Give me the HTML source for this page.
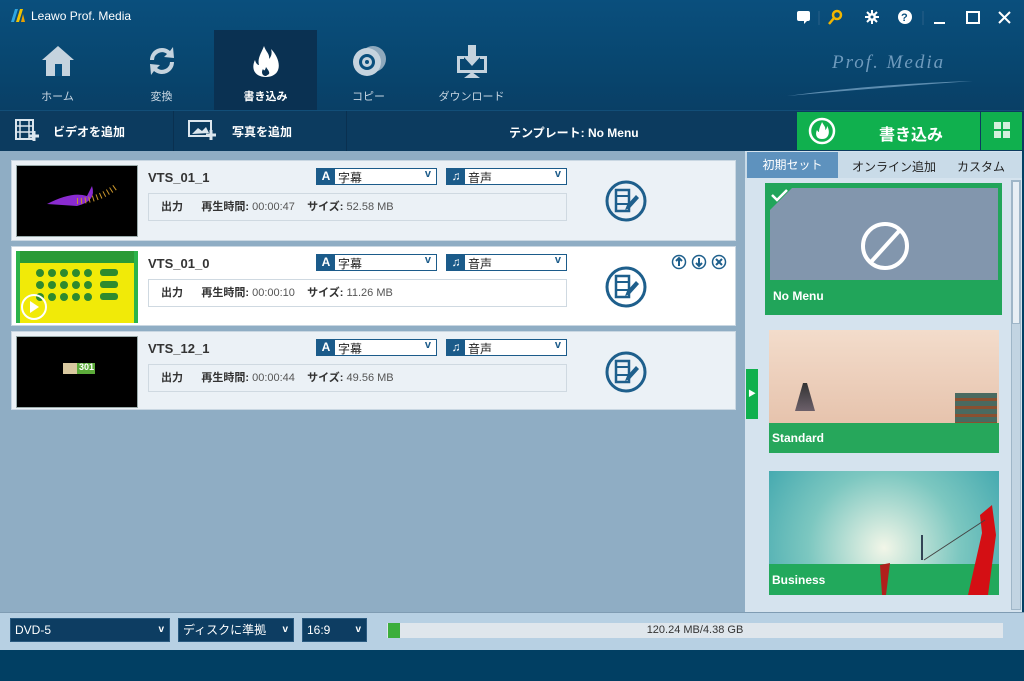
<!DOCTYPE html>
<html><head><meta charset="utf-8"><style>
*{margin:0;padding:0;box-sizing:border-box}
body{width:1024px;height:681px;overflow:hidden;font-family:"Liberation Sans","Noto Sans CJK JP",sans-serif;background:#013f63;position:relative}
.a{position:absolute}
.top{left:0;top:0;width:1024px;height:110px;background:linear-gradient(#0a4f7d,#08466f 60%,#093f66)}
.nav{top:30px;width:103px;height:80px;color:#c8d6e2;font-size:11px;text-align:center}
.nav span{position:absolute;left:0;right:0;top:58px}
.nav svg{position:absolute;left:34px;top:14px}
.bar2{left:0;top:110px;width:1024px;height:41px;background:#0c3b5f;border-top:1px solid #124e78}
.bt{color:#fff;font-size:12px;font-weight:bold}
.item{left:11px;width:725px;background:#ebf1f6;border:1px solid #c9d7e2}
.th{left:4px;top:4px;width:122px;height:72px;background:#000;border:1px solid #9aa}
.nm{left:136px;top:9px;font-size:13px;font-weight:bold;color:#333}
.sel{top:7px;height:17px;background:#fff;border:1px solid #1b5b8a;font-size:12px;color:#222}
.sel b{display:inline-block;width:18px;height:15px;background:#1b5b8a;color:#fff;text-align:center;font-size:12px;line-height:15px;vertical-align:top;margin-right:3px}
.sel i{position:absolute;right:5px;top:-1px;font-style:normal;color:#1b5b8a;font-weight:bold;font-size:11px}
.info{left:136px;top:32px;width:419px;height:28px;border:1px solid #cfd9e1;font-size:11px;color:#333;line-height:26px;padding-left:12px}
.info .g{color:#555}
.ed{left:592px;top:18px}
.ddl{top:618px;height:24px;background:#0d3d62;border:1px solid #2a5a80;color:#fff;font-size:12px;line-height:22px;padding-left:4px}
.ddl i{position:absolute;right:5px;font-style:normal;font-size:10px;font-weight:bold}
</style></head><body>
<div class="a top"></div>
<div class="a" style="left:10px;top:8px;width:16px;height:15px"><svg width="16" height="15"><path d="M1 14 L5 1 L8 1 L4 14Z" fill="#2fa5e0"/><path d="M6 14 L10 1 L13 1 L9 14Z" fill="#f2c200"/><path d="M11 14 L13 6 L15 14Z" fill="#e9a000"/></svg></div>
<div class="a" style="left:31px;top:9px;color:#fff;font-size:12px">Leawo Prof. Media</div>
<div class="a" style="left:795px;top:9px"><svg width="230" height="18">
<rect x="2" y="2" width="13" height="10" rx="2" fill="#fff"/><path d="M9 12 L9 15 L12 12Z" fill="#fff"/>
<line x1="24" y1="2" x2="24" y2="16" stroke="#2a6088"/>
<circle cx="42" cy="6" r="4" fill="none" stroke="#f2b600" stroke-width="2.5"/><path d="M39 9 L34 15" stroke="#f2b600" stroke-width="2.5"/>
<circle cx="77" cy="8" r="4" fill="#fff"/><path d="M77 1 V15 M70 8 H84 M72 3 L82 13 M82 3 L72 13" stroke="#fff" stroke-width="2"/><circle cx="77" cy="8" r="1.5" fill="#0a4f7d"/>
<circle cx="110" cy="8" r="7" fill="#fff"/><text x="106" y="12" font-size="11" font-weight="bold" fill="#0a4f7d" font-family="Liberation Sans">?</text>
<line x1="128" y1="2" x2="128" y2="16" stroke="#2a6088"/>
<rect x="139" y="13" width="11" height="2" fill="#fff"/>
<rect x="172" y="3" width="12" height="11" fill="none" stroke="#fff" stroke-width="2"/>
<path d="M204 3 L215 14 M215 3 L204 14" stroke="#fff" stroke-width="2"/>
</svg></div>
<div class="a nav" style="left:6px"><svg width="36" height="34"><path d="M18 2 L2 16 L6 16 L6 32 L30 32 L30 16 L34 16Z" fill="#c5d3de"/><rect x="15" y="20" width="7" height="12" fill="#0a4f7d"/></svg><span>ホーム</span></div>
<div class="a nav" style="left:110px"><svg width="36" height="34"><path d="M6 16 A12 12 0 0 1 26 7 L29 3 L30 14 L20 13 L23 10 A8 8 0 0 0 10 16Z" fill="#c5d3de"/><path d="M30 18 A12 12 0 0 1 10 27 L7 31 L6 20 L16 21 L13 24 A8 8 0 0 0 26 18Z" fill="#c5d3de"/></svg><span>変換</span></div>
<div class="a nav" style="left:214px;background:#0a3152;color:#fff;font-weight:bold"><svg width="36" height="34"><path d="M18 33 C6 33 3 24 7 16 C8 20 10 21 11 21 C9 14 14 8 16 2 C18 8 22 10 21 15 C24 12 24 8 23 5 C30 12 33 22 29 28 C27 31 23 33 18 33Z" fill="#fff"/><path d="M18 32 C14 32 13 28 15 25 C16 27 17 27 18 23 C20 26 22 28 21 30Z" fill="#0a3152"/></svg><span>書き込み</span></div>
<div class="a nav" style="left:317px"><svg width="36" height="34"><circle cx="22" cy="15" r="13" fill="#8fa9bd"/><circle cx="16" cy="18" r="14" fill="#c5d3de"/><circle cx="16" cy="18" r="8" fill="#0a4f7d"/><circle cx="16" cy="18" r="5" fill="#c5d3de"/><circle cx="16" cy="18" r="2" fill="#0a4f7d"/></svg><span>コピー</span></div>
<div class="a nav" style="left:420px"><svg width="36" height="34"><path d="M3 12 H10 V15 H6 V26 H30 V15 H26 V12 H33 V29 H3Z" fill="#c5d3de"/><path d="M14 1 H22 V12 H27 L18 22 L9 12 H14Z" fill="#c5d3de"/><path d="M10 34 L18 28 L26 34Z" fill="#c5d3de"/></svg><span>ダウンロード</span></div>
<div class="a" style="left:832px;top:52px;color:#6f9bbd;font-family:'Liberation Serif',serif;font-style:italic;font-size:19px;letter-spacing:2px">Prof. Media</div>
<svg class="a" style="left:785px;top:76px" width="190" height="22"><path d="M2 20 Q90 8 188 5 Q90 12 2 20Z" fill="#5d8db0"/></svg>
<div class="a bar2"></div>
<div class="a" style="left:173px;top:111px;width:1px;height:40px;background:#0a3050"></div>
<div class="a" style="left:346px;top:111px;width:1px;height:40px;background:#0a3050"></div>
<svg class="a" style="left:15px;top:119px" width="24" height="22"><rect x="1" y="1" width="17" height="19" fill="none" stroke="#dce6ee" stroke-width="2"/><path d="M5 1V20 M14 1V20 M1 7H18 M1 13H18" stroke="#dce6ee" stroke-width="1.5"/><path d="M19 12V22 M14 17H24" stroke="#dce6ee" stroke-width="3"/></svg>
<div class="a bt" style="left:53px;top:123px">ビデオを追加</div>
<svg class="a" style="left:188px;top:119px" width="30" height="22"><rect x="1" y="2" width="22" height="15" fill="none" stroke="#dce6ee" stroke-width="2"/><path d="M4 15 L10 9 L14 12 L18 8 L21 14Z" fill="#dce6ee"/><path d="M23 11V21 M18 16H28" stroke="#dce6ee" stroke-width="3"/></svg>
<div class="a bt" style="left:232px;top:123px">写真を追加</div>
<div class="a bt" style="left:509px;top:124px">テンプレート: No Menu</div>
<div class="a" style="left:797px;top:112px;width:183px;height:38px;background:#10b04e"></div>
<svg class="a" style="left:808px;top:117px" width="28" height="28"><circle cx="14" cy="14" r="12" fill="none" stroke="#fff" stroke-width="2.5"/><path d="M14 22 C8 22 7 17 9 13 C10 15 11 15 11 15 C11 11 13 8 14 5 C16 9 18 10 17 13 C19 12 19 10 19 9 C22 13 22 22 14 22Z" fill="#fff"/></svg>
<div class="a" style="left:879px;top:121px;color:#fff;font-size:16px;font-weight:bold">書き込み</div>
<div class="a" style="left:981px;top:112px;width:41px;height:38px;background:#10b04e"></div>
<div class="a" style="left:994px;top:122px;width:7px;height:7px;background:#d4f0dc"></div><div class="a" style="left:1003px;top:122px;width:7px;height:7px;background:#d4f0dc"></div>
<div class="a" style="left:994px;top:131px;width:7px;height:7px;background:#d4f0dc"></div><div class="a" style="left:1003px;top:131px;width:7px;height:7px;background:#d4f0dc"></div>
<div class="a" style="left:0;top:151px;width:745px;height:461px;background:#8fadc4"></div>
<div class="a" style="left:745px;top:151px;width:277px;height:461px;background:#d5e3ee"></div>
<div class="a" style="left:745px;top:152px;width:277px;height:26px;background:#c9dbe8"></div>
<div class="a" style="left:747px;top:152px;width:91px;height:26px;background:#5e92be;color:#fff;font-size:12px;text-align:center;line-height:26px">初期セット</div>
<div class="a" style="left:852px;top:158px;color:#222;font-size:12px">オンライン追加</div>
<div class="a" style="left:957px;top:158px;color:#222;font-size:12px">カスタム</div>
<div class="a" style="left:1011px;top:180px;width:10px;height:430px;background:#c2d4e2;border:1px solid #9fb6c8"></div>
<div class="a" style="left:1012px;top:181px;width:8px;height:143px;background:#e8eff5;border:1px solid #9fb6c8"></div>
<div class="a" style="left:746px;top:369px;width:12px;height:50px;background:#10b04e;color:#fff;font-size:8px;line-height:50px;text-align:center">▶</div>
<div class="a" style="left:765px;top:183px;width:237px;height:132px;background:#21a55a"></div>
<div class="a" style="left:770px;top:188px;width:228px;height:92px;background:#8296ad"></div>
<svg class="a" style="left:765px;top:183px" width="237" height="100"><path d="M0 0 H32 L0 32Z" fill="#21a55a"/><path d="M7 12 L12 17 L22 7" stroke="#fff" stroke-width="2.5" fill="none"/><circle cx="120" cy="63" r="22" fill="none" stroke="#fff" stroke-width="4"/><path d="M106 79 L135 47" stroke="#fff" stroke-width="4"/></svg>
<div class="a" style="left:773px;top:289px;color:#fff;font-size:12px;font-weight:bold">No Menu</div>
<div class="a" style="left:769px;top:330px;width:230px;height:123px;background:linear-gradient(#f3dccb,#e2bba3)"></div>
<div class="a" style="left:795px;top:383px;width:20px;height:35px;background:linear-gradient(#333,#7a6b78);clip-path:polygon(40% 0,60% 0,100% 80%,0 80%)"></div>
<div class="a" style="left:955px;top:393px;width:42px;height:30px;background:repeating-linear-gradient(#4a6a60 0 5px,#8a5030 5px 8px)"></div>
<div class="a" style="left:769px;top:423px;width:230px;height:30px;background:rgba(22,165,85,.92)"></div>
<div class="a" style="left:772px;top:431px;color:#fff;font-size:12px;font-weight:bold">Standard</div>
<div class="a" style="left:769px;top:471px;width:230px;height:124px;background:radial-gradient(circle at 50% 62%,#f2f6e8,#7cc7c0 55%,#46aab0)"></div>
<div class="a" style="left:769px;top:564px;width:230px;height:31px;background:#22a95c"></div>
<svg class="a" style="left:860px;top:505px" width="140" height="90"><path d="M120 10 L132 0 L136 30 L128 90 L108 90 L122 28Z" fill="#d40f14"/><path d="M20 60 L30 58 L26 90 L22 90Z" fill="#b0201c"/><path d="M62 55 V30" stroke="#345" stroke-width="2"/><path d="M64 55 L125 15" stroke="#444"/></svg>
<div class="a" style="left:772px;top:573px;color:#fff;font-size:12px;font-weight:bold">Business</div>
<div class="a item" style="top:160px;height:81px">
 <div class="a th"><svg width="120" height="70"><path d="M30 38 Q55 25 70 30 L75 20 Q80 35 60 40Z" fill="#8a2bd0"/><path d="M60 35 Q80 35 100 20" stroke="#c9952b" stroke-width="6" stroke-dasharray="1 3" fill="none"/></svg></div>
 <div class="a nm">VTS_01_1</div>
 <div class="a sel" style="left:304px;width:121px"><b>A</b>字幕<i>v</i></div>
 <div class="a sel" style="left:434px;width:121px"><b>♫</b>音声<i>v</i></div>
 <div class="a info"><b>出力</b>&nbsp;&nbsp;&nbsp;&nbsp;&nbsp;&nbsp;<b>再生時間:</b> <span class="g">00:00:47</span>&nbsp;&nbsp;&nbsp;&nbsp;<b>サイズ:</b> <span class="g">52.58 MB</span></div>
 <svg class="a ed" width="44" height="44"><circle cx="22" cy="22" r="19" fill="none" stroke="#1e5f8c" stroke-width="3"/><rect x="12" y="11" width="13" height="21" fill="none" stroke="#1e5f8c" stroke-width="2.5"/><path d="M12 17H25 M12 25H25" stroke="#1e5f8c" stroke-width="2"/><path d="M21 31 L23 26 L32 16 L35 19 L26 29Z" fill="#1e5f8c"/></svg>
</div>
<div class="a item" style="top:246px;height:80px;background:#fff">
 <div class="a th" style="background:#f1ea08;border-color:#2bb34a;border-width:0 4px"><svg width="114" height="72"><rect x="0" y="0" width="114" height="12" fill="#2a9a35"/><g fill="#2e8a2e"><circle cx="20" cy="22" r="4"/><circle cx="32" cy="22" r="4"/><circle cx="44" cy="22" r="4"/><circle cx="56" cy="22" r="4"/><circle cx="68" cy="22" r="4"/><circle cx="20" cy="34" r="4"/><circle cx="32" cy="34" r="4"/><circle cx="44" cy="34" r="4"/><circle cx="56" cy="34" r="4"/><circle cx="68" cy="34" r="4"/><circle cx="20" cy="46" r="4"/><circle cx="32" cy="46" r="4"/><circle cx="44" cy="46" r="4"/><circle cx="56" cy="46" r="4"/><circle cx="68" cy="46" r="4"/><rect x="80" y="18" width="18" height="7" rx="3"/><rect x="80" y="30" width="18" height="7" rx="3"/><rect x="80" y="42" width="18" height="7" rx="3"/></g><circle cx="14" cy="56" r="12" fill="none" stroke="#fff" stroke-width="2"/><path d="M10 50 L19 56 L10 62Z" fill="#fff"/></svg></div>
 <div class="a nm">VTS_01_0</div>
 <div class="a sel" style="left:304px;width:121px"><b>A</b>字幕<i>v</i></div>
 <div class="a sel" style="left:434px;width:121px"><b>♫</b>音声<i>v</i></div>
 <div class="a info"><b>出力</b>&nbsp;&nbsp;&nbsp;&nbsp;&nbsp;&nbsp;<b>再生時間:</b> <span class="g">00:00:10</span>&nbsp;&nbsp;&nbsp;&nbsp;<b>サイズ:</b> <span class="g">11.26 MB</span></div>
 <svg class="a ed" width="44" height="44"><circle cx="22" cy="22" r="19" fill="none" stroke="#1e5f8c" stroke-width="3"/><rect x="12" y="11" width="13" height="21" fill="none" stroke="#1e5f8c" stroke-width="2.5"/><path d="M12 17H25 M12 25H25" stroke="#1e5f8c" stroke-width="2"/><path d="M21 31 L23 26 L32 16 L35 19 L26 29Z" fill="#1e5f8c"/></svg>
 <svg class="a" style="left:659px;top:7px" width="60" height="16"><g fill="none" stroke="#1e5f8c" stroke-width="1.5"><circle cx="8" cy="8" r="6.5"/><circle cx="28" cy="8" r="6.5"/><circle cx="48" cy="8" r="6.5"/><path d="M8 12V5 M5 7L8 4L11 7 M28 4V11 M25 9L28 12L31 9 M45 5L51 11 M51 5L45 11" stroke-width="2"/></g></svg>
</div>
<div class="a item" style="top:331px;height:79px">
 <div class="a th"><div class="a" style="left:46px;top:26px;width:32px;height:11px;background:#5cab3a"></div><div class="a" style="left:46px;top:26px;width:14px;height:11px;background:#d9c9a0"></div><div class="a" style="left:62px;top:25px;color:#fff;font-size:9px;font-weight:bold">301</div></div>
 <div class="a nm">VTS_12_1</div>
 <div class="a sel" style="left:304px;width:121px"><b>A</b>字幕<i>v</i></div>
 <div class="a sel" style="left:434px;width:121px"><b>♫</b>音声<i>v</i></div>
 <div class="a info"><b>出力</b>&nbsp;&nbsp;&nbsp;&nbsp;&nbsp;&nbsp;<b>再生時間:</b> <span class="g">00:00:44</span>&nbsp;&nbsp;&nbsp;&nbsp;<b>サイズ:</b> <span class="g">49.56 MB</span></div>
 <svg class="a ed" width="44" height="44"><circle cx="22" cy="22" r="19" fill="none" stroke="#1e5f8c" stroke-width="3"/><rect x="12" y="11" width="13" height="21" fill="none" stroke="#1e5f8c" stroke-width="2.5"/><path d="M12 17H25 M12 25H25" stroke="#1e5f8c" stroke-width="2"/><path d="M21 31 L23 26 L32 16 L35 19 L26 29Z" fill="#1e5f8c"/></svg>
</div>
<div class="a" style="left:0;top:612px;width:1024px;height:38px;background:#b7d0e3;border-top:1px solid #7f9cb3"></div>
<div class="a ddl" style="left:10px;width:160px">DVD-5<i>v</i></div>
<div class="a ddl" style="left:178px;width:116px">ディスクに準拠<i>v</i></div>
<div class="a ddl" style="left:302px;width:65px">16:9<i>v</i></div>
<div class="a" style="left:387px;top:623px;width:616px;height:15px;background:#dfe6ec;font-size:11px;color:#333;text-align:center;line-height:15px">120.24 MB/4.38 GB</div>
<div class="a" style="left:388px;top:623px;width:12px;height:15px;background:#3cae3c"></div>
</body></html>
